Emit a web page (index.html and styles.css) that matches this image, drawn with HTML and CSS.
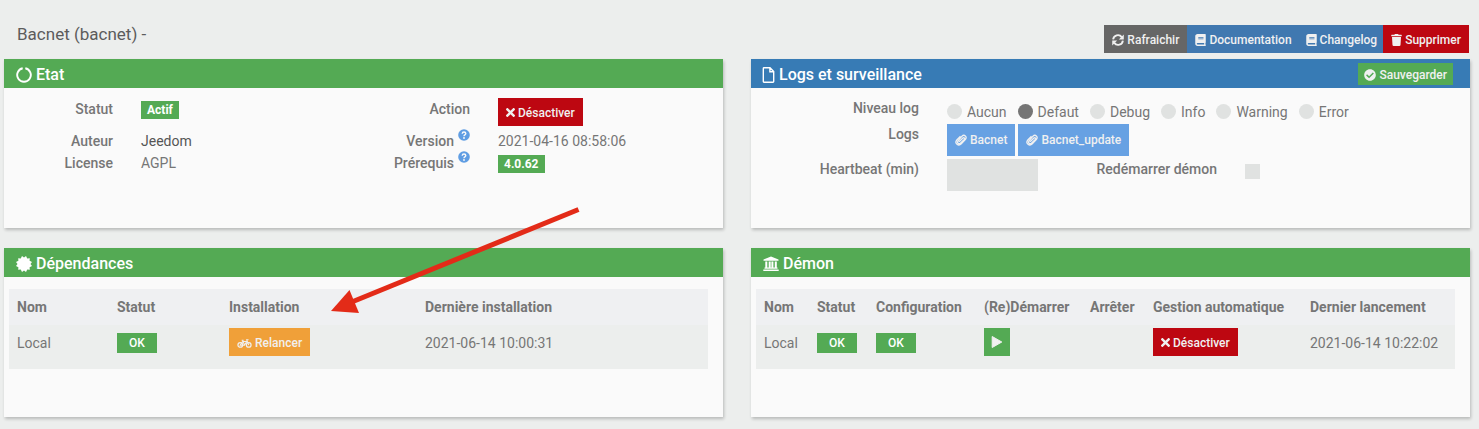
FILE: index.html
```html
<!DOCTYPE html>
<html lang="fr">
<head>
<meta charset="utf-8">
<title>Bacnet</title>
<link rel="stylesheet" href="styles.css">
</head>
<body>
<svg class="sprite" aria-hidden="true">
  <symbol id="notch" viewBox="0 0 16 16"><path d="M9.300 1.300A6.800 6.800 0 1 1 6.700 1.300" fill="none" stroke="currentColor" stroke-width="1.900"/></symbol>
  <symbol id="file" viewBox="0 0 12 16"><path d="M.8 1.500q0-.7.7-.7h6l3.700 3.700v10q0 .7-.7.7h-9q-.7 0-.7-.7zM7.400 1v3.700h3.700" fill="none" stroke="currentColor" stroke-width="1.400"/></symbol>
  <symbol id="seal" viewBox="-8 -8 16 16"><path d="M0-6.500L2-8 3.250-5.600 5.800-5.800 5.600-3.250 8-2 6.500 0 8 2 5.600 3.250 5.800 5.800 3.250 5.600 2 8 0 6.500-2 8-3.250 5.600-5.800 5.800-5.600 3.250-8 2-6.500 0-8-2-5.600-3.250-5.800-5.800-3.250-5.600-2-8z" fill="currentColor"/></symbol>
  <symbol id="bank" viewBox="0 0 16 16"><path d="M8 .5l7.500 3v1.300H.5V3.500zM2.300 5.500h2v6h1.400v-6h2v6h.7v-6h2v6h1.400v-6h2v6h.7v1.200H1.500v-1.200h.8zM.3 13.500h15.400V15H.3z" fill="currentColor"/></symbol>
  <symbol id="sync" viewBox="0 0 16 16"><path d="M1.500 7.300A6.400 6.400 0 0 1 13 4.200M14.500 8.700A6.400 6.400 0 0 1 3 11.800" fill="none" stroke="currentColor" stroke-width="2.500"/><path d="M15.700.6v6.600H9.100zM.3 15.400v-6.600h6.600z" fill="currentColor"/></symbol>
  <symbol id="book" viewBox="0 0 448 512"><path fill="currentColor" d="M448 360V24c0-13.300-10.700-24-24-24H96C43 0 0 43 0 96v320c0 53 43 96 96 96h328c13.300 0 24-10.700 24-24v-16c0-7.500-3.500-14.300-8.900-18.700-4.200-15.400-4.200-59.300 0-74.700 5.400-4.300 8.900-11.100 8.900-18.600zM128 134c0-3.300 2.700-6 6-6h212c3.300 0 6 2.700 6 6v20c0 3.300-2.700 6-6 6H134c-3.300 0-6-2.700-6-6v-20zm0 64c0-3.300 2.700-6 6-6h212c3.300 0 6 2.700 6 6v20c0 3.300-2.700 6-6 6H134c-3.300 0-6-2.700-6-6v-20zm253.400 250H96c-17.700 0-32-14.300-32-32 0-17.600 14.400-32 32-32h285.400c-1.900 17.100-1.900 46.900 0 64z"/></symbol>
  <symbol id="trash" viewBox="0 0 448 512"><path fill="currentColor" d="M432 32H312l-9.400-18.700A24 24 0 0 0 281.100 0H166.800a23.720 23.720 0 0 0-21.400 13.300L136 32H16A16 16 0 0 0 0 48v32a16 16 0 0 0 16 16h416a16 16 0 0 0 16-16V48a16 16 0 0 0-16-16zM53.200 467a48 48 0 0 0 47.900 45h245.800a48 48 0 0 0 47.900-45L416 128H32z"/></symbol>
  <symbol id="check" viewBox="0 0 512 512"><path fill="currentColor" d="M504 256c0 136.967-111.033 248-248 248S8 392.967 8 256 119.033 8 256 8s248 111.033 248 248zM227.314 387.314l184-184c6.248-6.248 6.248-16.379 0-22.627l-22.627-22.627c-6.248-6.249-16.379-6.249-22.628 0L216 308.118l-70.059-70.059c-6.248-6.248-16.379-6.248-22.628 0l-22.627 22.627c-6.248 6.248-6.248 16.379 0 22.627l104 104c6.249 6.249 16.379 6.249 22.628.001z"/></symbol>
  <symbol id="times" viewBox="0 80 352 352"><path fill="currentColor" d="M242.720 256l100.070-100.070c12.280-12.280 12.280-32.190 0-44.480l-22.240-22.240c-12.280-12.280-32.190-12.280-44.480 0L176 189.280 75.930 89.210c-12.280-12.280-32.190-12.280-44.480 0L9.210 111.450c-12.280 12.280-12.280 32.190 0 44.480L109.280 256 9.210 356.070c-12.280 12.280-12.280 32.190 0 44.480l22.240 22.240c12.280 12.280 32.200 12.280 44.480 0L176 322.720l100.070 100.070c12.280 12.280 32.200 12.280 44.480 0l22.240-22.240c12.280-12.280 12.280-32.190 0-44.480L242.720 256z"/></symbol>
  <symbol id="help" viewBox="0 0 12 12"><circle cx="6" cy="6" r="5.800" fill="currentColor"/><path d="M4.200 4.700Q4.300 3 6 3T7.800 4.600Q7.800 5.400 6.900 5.900T6 7.200" fill="none" stroke="#fafafa" stroke-width="1.400"/><circle cx="6" cy="9" r=".9" fill="#fafafa"/></symbol>
  <symbol id="clip" viewBox="0 0 12 12"><path d="M4 7.900l3.900-3.900q.8-.7 1.400 0t0 1.400L5.400 9.300q-1.200 1-2.300 0t0-2.400L7 2.200q1.700-1.700 3.300-.3t.2 3.500L6.300 9.800Q4.200 12 2 10.300T1.800 6L5.500 2.200" fill="none" stroke="currentColor" stroke-width="1.300"/></symbol>
  <symbol id="bike" viewBox="0 0 16 12"><path d="M3.500 8.300L6 4.500h4.500L8 8.300zM5 3h2M6 3l2 5.300M12.500 8.300L10.300 2.500h2" fill="none" stroke="currentColor" stroke-width="1.100"/><circle cx="3.500" cy="8" r="2.500" fill="none" stroke="currentColor" stroke-width="1.300"/><circle cx="12.500" cy="8" r="2.500" fill="none" stroke="currentColor" stroke-width="1.300"/></symbol>
  <symbol id="play" viewBox="0 0 12 14"><path d="M1.200 1.500L10.800 7 1.200 12.500z" fill="currentColor" stroke="currentColor" stroke-linejoin="round"/></symbol>
</svg>

<main class="page">
  <header class="topbar">
    <h1 class="title">Bacnet (bacnet) -</h1>
    <div class="toolbar">
      <button class="btn btn-gray" type="button"><svg class="icon"><use href="#sync"/></svg>Rafraichir</button>
      <a class="btn btn-doc" href="#doc"><svg class="icon icon-narrow"><use href="#book"/></svg>Documentation</a>
      <a class="btn btn-doc btn-log" href="#changelog"><svg class="icon icon-narrow"><use href="#book"/></svg>Changelog</a>
      <button class="btn btn-red" type="button"><svg class="icon icon-narrow"><use href="#trash"/></svg>Supprimer</button>
    </div>
  </header>

  <div class="panels">
    <section class="panel">
      <div class="panel-head">
        <h2 class="head-text"><svg class="head-icon"><use href="#notch"/></svg>Etat</h2>
      </div>
      <div class="halves">
        <dl class="facts">
          <dt>Statut</dt><dd class="tall"><span class="badge">Actif</span></dd>
          <dt>Auteur</dt><dd class="strong">Jeedom</dd>
          <dt>License</dt><dd>AGPL</dd>
        </dl>
        <dl class="facts">
          <dt>Action</dt><dd class="tall"><button class="btn btn-red" type="button"><svg class="icon icon-small"><use href="#times"/></svg>Désactiver</button></dd>
          <dt>Version <svg class="help"><use href="#help"/></svg></dt><dd>2021-04-16 08:58:06</dd>
          <dt>Prérequis <svg class="help"><use href="#help"/></svg></dt><dd><span class="badge">4.0.62</span></dd>
        </dl>
      </div>
    </section>

    <section class="panel">
      <div class="panel-head panel-head-blue">
        <h2 class="head-text"><svg class="head-icon head-icon-file"><use href="#file"/></svg>Logs et surveillance</h2>
        <button class="btn btn-save" type="button"><svg class="icon"><use href="#check"/></svg>Sauvegarder</button>
      </div>
      <form class="settings">
        <span class="label" id="level">Niveau log</span>
        <div class="radios" role="radiogroup" aria-labelledby="level">
          <label class="choice"><input class="radio" type="radio" name="level">Aucun</label>
          <label class="choice"><input class="radio" type="radio" name="level" checked>Defaut</label>
          <label class="choice"><input class="radio" type="radio" name="level">Debug</label>
          <label class="choice"><input class="radio" type="radio" name="level">Info</label>
          <label class="choice"><input class="radio" type="radio" name="level">Warning</label>
          <label class="choice"><input class="radio" type="radio" name="level">Error</label>
        </div>
        <span class="label">Logs</span>
        <div class="logs">
          <a class="btn btn-light" href="#bacnet"><svg class="icon"><use href="#clip"/></svg>Bacnet</a>
          <a class="btn btn-light" href="#bacnet_update"><svg class="icon"><use href="#clip"/></svg>Bacnet_update</a>
        </div>
        <label class="label" for="heartbeat">Heartbeat (min)</label>
        <div class="heart">
          <input class="field" id="heartbeat" type="text">
          <label class="label restart" for="restart">Redémarrer démon</label>
          <input class="tick" id="restart" type="checkbox">
        </div>
      </form>
    </section>

    <section class="panel">
      <div class="panel-head">
        <h2 class="head-text"><svg class="head-icon"><use href="#seal"/></svg>Dépendances</h2>
      </div>
      <table class="table deps">
        <thead><tr><th>Nom</th><th>Statut</th><th>Installation</th><th>Dernière installation</th></tr></thead>
        <tbody><tr>
          <td>Local</td>
          <td><span class="ok">OK</span></td>
          <td><button class="btn btn-orange" type="button"><svg class="icon icon-bike"><use href="#bike"/></svg>Relancer</button></td>
          <td>2021-06-14 10:00:31</td>
        </tr></tbody>
      </table>
    </section>

    <section class="panel">
      <div class="panel-head">
        <h2 class="head-text"><svg class="head-icon"><use href="#bank"/></svg>Démon</h2>
      </div>
      <table class="table daemon">
        <thead><tr><th>Nom</th><th>Statut</th><th>Configuration</th><th>(Re)Démarrer</th><th>Arrêter</th><th>Gestion automatique</th><th>Dernier lancement</th></tr></thead>
        <tbody><tr>
          <td>Local</td>
          <td><span class="ok">OK</span></td>
          <td><span class="ok">OK</span></td>
          <td><button class="btn btn-play" type="button" aria-label="Démarrer"><svg class="icon-play"><use href="#play"/></svg></button></td>
          <td></td>
          <td><button class="btn btn-red" type="button"><svg class="icon icon-small"><use href="#times"/></svg>Désactiver</button></td>
          <td>2021-06-14 10:22:02</td>
        </tr></tbody>
      </table>
    </section>
  </div>

  <svg class="arrow" viewBox="0 0 250 108" aria-hidden="true"><path d="M23 94.500L248.500 2.500" fill="none" stroke="#e32b18" stroke-width="5"/><path d="M1 104l18.500-21 9.500 23z" fill="#e32b18"/></svg>
</main>
</body>
</html>
```
FILE: styles.css
```css
* { box-sizing: border-box; }

body {
  margin: 0;
  background: #eceeed;
  color: #767676;
  font: 14px/22px Roboto, "Liberation Sans", sans-serif;
}

.sprite { position: absolute; width: 0; height: 0; }

.page {
  position: relative;
  padding: 0 9px 12px 4px;
}

.topbar {
  display: flex;
  justify-content: space-between;
  align-items: flex-start;
  padding: 25px 1px 6px 13px;
}

.title {
  margin: 0;
  color: #5c5c5c;
  font-size: 17px;
  font-weight: 400;
  line-height: 18px;
}

.toolbar { display: flex; }

.btn {
  display: inline-flex;
  align-items: center;
  gap: 3px;
  height: 28px;
  padding: 1px 8px 0;
  border: 0;
  color: #f0f0f0;
  font: 12px/20px Roboto, "Liberation Sans", sans-serif;
  font-weight: 500;
  text-decoration: none;
  white-space: nowrap;
  cursor: pointer;
  vertical-align: top;
}

.btn-gray { background: #666; }
.btn-doc { background: #4078b0; }
.btn-log { padding: 1px 6px 0; }
.btn-red { background: #bd0711; }
.btn-orange { background: #f0a039; }
.btn-light { height: 32px; padding: 0 8px; background: #67a1e3; }
.btn-save { height: 22px; padding: 2px 6px 0; background: #54aa54; }
.btn-play { width: 26px; padding: 0; justify-content: center; background: #54aa54; }

.icon { width: 12px; height: 12px; flex: none; }
.icon-narrow { width: 11px; }
.icon-small { width: 9px; height: 9px; }
.icon-bike { width: 15px; }
.icon-play { width: 12px; height: 14px; }

.panels {
  display: grid;
  grid-template-columns: 1fr 1fr;
  gap: 20px 28px;
}

.panel {
  min-height: 169px;
  background: #fafafa;
  box-shadow: 1px 2px 3px rgba(0, 0, 0, 0.22);
}

.panel-head {
  display: flex;
  align-items: center;
  justify-content: space-between;
  height: 29px;
  padding: 0 17px 0 12px;
  background: #54aa54;
}

.panel-head-blue { padding-left: 11px; background: #377bb5; }

.head-text {
  display: flex;
  align-items: center;
  gap: 4px;
  margin: 0;
  padding-top: 2px;
  color: #fff;
  font-size: 16px;
  font-weight: 500;
}

.head-icon { width: 16px; height: 16px; flex: none; }
.head-icon-file { width: 13px; }

.halves {
  display: grid;
  grid-template-columns: 1fr 1fr;
  padding: 10px 5px 0 0;
}

.facts {
  display: grid;
  grid-template-columns: 109px 1fr;
  column-gap: 28px;
  margin: 0;
}

.facts dt {
  display: flex;
  justify-content: flex-end;
  gap: 4px;
  height: 22px;
  font-weight: 500;
}
.facts dd { margin: 0; height: 22px; }
.facts .tall { height: 32px; }
.facts .strong { color: #555; }

.help { width: 12px; height: 12px; margin-top: -1px; color: #5f9de3; }

.badge {
  display: inline-block;
  padding: 0 6px;
  background: #54aa54;
  color: #fff;
  font-size: 12px;
  font-weight: 700;
  line-height: 18px;
}

.settings {
  display: grid;
  grid-template-columns: 168px 1fr;
  gap: 3px 28px;
  padding-top: 10px;
}

.label { text-align: right; font-weight: 500; line-height: 20px; }

.radios { display: flex; gap: 11px; height: 23px; padding-top: 4px; line-height: 20px; }
.choice { display: flex; align-items: center; gap: 5px; }

.radio, .tick {
  appearance: none;
  width: 15px;
  height: 15px;
  margin: 0;
  background: #e0e2e1;
}

.radio { border-radius: 50%; }
.radio:checked { background: #757575; }

.logs { display: flex; gap: 3px; }
.heart { display: flex; }

.field {
  width: 91px;
  height: 32px;
  padding: 4px 8px;
  border: 0;
  background: #e0e2e1;
  color: inherit;
  font: inherit;
}

.restart { width: 179px; }
.tick { margin: 5px 0 0 28px; }

.table {
  width: calc(100% - 20px);
  margin: 12px 0 0 5px;
  border-collapse: collapse;
  table-layout: fixed;
}

.table th {
  height: 36px;
  padding: 0 8px;
  background: #eff0f2;
  text-align: left;
  font-weight: 700;
  white-space: nowrap;
}

.table td {
  height: 44px;
  padding: 3px 8px 11px;
  background: #eceeed;
  white-space: nowrap;
}

.table .btn { margin-bottom: 2px; }

.ok {
  display: block;
  width: 40px;
  background: #54aa54;
  color: #fff;
  font-size: 12px;
  font-weight: 500;
  line-height: 20px;
  text-align: center;
}

.deps th:nth-child(1) { width: 100px; }
.deps th:nth-child(2) { width: 112px; }
.deps th:nth-child(3) { width: 196px; }

.daemon th:nth-child(1) { width: 53px; }
.daemon th:nth-child(2) { width: 59px; }
.daemon th:nth-child(3) { width: 108px; }
.daemon th:nth-child(4) { width: 106px; }
.daemon th:nth-child(5) { width: 63px; }
.daemon th:nth-child(6) { width: 157px; }

.arrow {
  position: absolute;
  top: 207px;
  left: 330px;
  width: 250px;
  height: 108px;
  pointer-events: none;
}
```
